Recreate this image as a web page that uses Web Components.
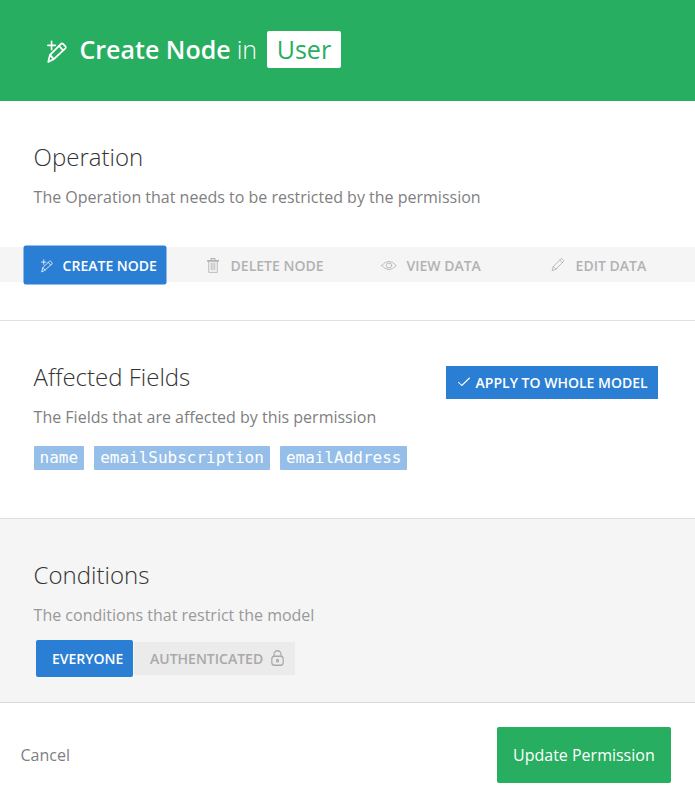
<!DOCTYPE html>
<html lang="en">
<head>
<meta charset="utf-8">
<title>Update Permission</title>
<style>
  html, body { margin: 0; background: #fff; }
  body { font-family: "Open Sans", sans-serif; font-size: 16px; }
</style>
</head>
<body>
<permission-popup></permission-popup>
<script>
const icons = {
  create: '<path d="M5.500 1.500v8.500M1 5.700h9M1.500 23.300l2-7.300L17 4q1-.8 2 0l3.200 2.800q.8 1 0 2L8 20.500ZM3.800 16L8 20.500M14.700 6.500L19.300 11"/>',
  trash: '<path d="M1 4.500h22" stroke-width="2.600"/><path d="M8 3V1h8v2" stroke-width="2"/><path d="M3.500 5v18h17V5M8.500 8v11M12 8v11M15.500 8v11"/>',
  eye: '<path d="M1 12Q12-6 23 12Q12 30 1 12Z"/><ellipse cx="12" cy="12" rx="4" ry="5.500"/>',
  edit: '<path d="M2 21l2-6.500L17 1.500q1-1 2 0l2.500 2.500q1 1 0 2L8.500 19ZM4 14.500l4.500 4.500M15 3.500l4.500 4.500"/>',
  check: '<path d="M1 12.500l6.500 6.500L23 4"/>',
  lock: '<rect x="1.500" y="9.500" width="21" height="13.500" rx="4.500"/><path d="M5.500 9.500V7a6.500 6 0 0 1 13 0v2.500"/><circle cx="12" cy="16" r="1.800"/>'
};

class LineIcon extends HTMLElement {
  connectedCallback() {
    this.attachShadow({ mode: 'open' }).innerHTML = `
      <style>
        :host { display: block; flex: none; width: var(--w, 14px); height: var(--h, 14px); }
        svg { display: block; width: 100%; height: 100%; overflow: visible; fill: none;
              stroke: currentColor; stroke-width: var(--stroke, 1.6); stroke-linejoin: round; stroke-linecap: round; }
      </style>
      <svg viewBox="0 0 24 24" preserveAspectRatio="none">${icons[this.getAttribute('name')]}</svg>`;
  }
}
customElements.define('line-icon', LineIcon);

class PopupHeader extends HTMLElement {
  connectedCallback() {
    this.attachShadow({ mode: 'open' }).innerHTML = `
      <style>
        :host { display: flex; align-items: flex-start; box-sizing: border-box; height: 101px; padding: 31px 0 0 46.7px;
                background: #28ae60; color: #fff; font-size: 25px; line-height: 37px; }
        line-icon { --w: 20px; --h: 22.5px; --stroke: 2; margin: 9px 12.8px 0 0; }
        b { font-weight: 600; }
        i { font-style: normal; font-weight: 300; margin: 0 9.700px 0 6px; }
        span { background: #fff; color: #28ae60; border-radius: 2px; padding: 0 10px; }
      </style>
      <line-icon name="create"></line-icon><b><slot></slot></b><i>in</i><span><slot name="model"></slot></span>`;
  }
}
customElements.define('popup-header', PopupHeader);

class PopupSection extends HTMLElement {
  connectedCallback() {
    this.attachShadow({ mode: 'open' }).innerHTML = `
      <style>
        :host { display: block; box-sizing: border-box; border-bottom: 1px solid #dfdfdf; padding-top: 40px; }
        header { display: flex; justify-content: space-between; padding: 0 37px 0 33.6px; }
        h2 { margin: 0 0 12px; font-size: 24px; line-height: 32px; font-weight: 300; color: #333; }
        p { margin: 0; line-height: 24px; color: var(--desc, #7f7f7f); }
      </style>
      <header><div><h2><slot name="title"></slot></h2><p><slot name="desc"></slot></p></div><slot name="action"></slot></header>
      <slot></slot>`;
  }
}
customElements.define('popup-section', PopupSection);

class OperationTabs extends HTMLElement {
  connectedCallback() {
    this.attachShadow({ mode: 'open' }).innerHTML = `
      <style>
        :host { display: grid; grid-template-columns: 183px 174px 170px 1fr; box-sizing: border-box; align-items: center;
                height: 35px; margin-top: 38px; padding-left: 24px; background: #f5f5f5; }
      </style>
      <slot></slot>`;
  }
}
customElements.define('operation-tabs', OperationTabs);

class OperationTab extends HTMLElement {
  connectedCallback() {
    this.attachShadow({ mode: 'open' }).innerHTML = `
      <style>
        :host { display: flex; align-items: center; height: 37px; margin-bottom: 2px; font-size: 14px; line-height: 37px; font-weight: 600; color: #b2b2b2;
                text-transform: uppercase; white-space: nowrap; }
        :host([active]) { justify-self: start; margin-bottom: 0; box-sizing: border-box; width: 142px; height: 38px; padding: 1px 0 0 16.6px; border-radius: 2px;
                margin-top: -3px; background: #2a7ed3; color: #fff; box-shadow: 0 0 0 .5px #2a7ed3; }
        line-icon { --stroke: 1.5; margin: -1px var(--gap, 10.6px) 0 0; }
      </style>
      <line-icon name="${this.getAttribute('icon')}"></line-icon><slot></slot>`;
  }
}
customElements.define('operation-tab', OperationTab);

class ApplyButton extends HTMLElement {
  connectedCallback() {
    this.attachShadow({ mode: 'open' }).innerHTML = `
      <style>
        :host { display: flex; align-items: center; box-sizing: border-box; width: 212px; height: 33px; margin-top: 5px; padding-left: 12px;
                background: #2a7ed3; color: #fff; font-size: 14px; font-weight: 600; text-transform: uppercase; white-space: nowrap; }
        line-icon { --w: 12px; --h: 12px; --stroke: 2.1; margin: -1px 5.6px 0 0; }
      </style>
      <line-icon name="check"></line-icon><slot></slot>`;
  }
}
customElements.define('apply-button', ApplyButton);

class FieldTags extends HTMLElement {
  connectedCallback() {
    this.attachShadow({ mode: 'open' }).innerHTML = `
      <style>
        :host { display: flex; gap: 10px; padding: 17px 34px 0 33.6px; }
        ::slotted(span) { height: 24px; padding: 0 6px; border-radius: 1px; background: #95bee9; color: #fff;
                font: 16px/24px "DejaVu Sans Mono", monospace; }
      </style>
      <slot></slot>`;
  }
}
customElements.define('field-tags', FieldTags);

class AudienceSwitch extends HTMLElement {
  connectedCallback() {
    this.attachShadow({ mode: 'open' }).innerHTML = `
      <style>
        :host { display: flex; align-items: center; margin: 13px 0 0 36px; font-size: 14px; line-height: 37px; font-weight: 600; text-transform: uppercase; }
        .on { box-sizing: border-box; width: 97px; height: 37px; padding-left: 16px; border-radius: 2px; background: #2a7ed3; color: #fff; }
        .off { display: flex; align-items: center; box-sizing: border-box; width: 161px; margin-left: 1px; height: 33px; padding-left: 16px; background: #ebebeb; color: #a9a9a9; }
        line-icon { --w: 13px; --h: 16px; --stroke: 2.2; margin: -1px 0 0 7.5px; }
      </style>
      <div class="on"><slot name="on"></slot></div>
      <div class="off"><slot name="off"></slot><line-icon name="lock"></line-icon></div>`;
  }
}
customElements.define('audience-switch', AudienceSwitch);

class PopupFooter extends HTMLElement {
  connectedCallback() {
    this.attachShadow({ mode: 'open' }).innerHTML = `
      <style>
        :host { display: flex; align-items: center; justify-content: space-between; height: 56px; padding: 24px 24px 21px 20.5px; color: #7f7f7f; }
        .save { box-sizing: border-box; width: 174px; line-height: 56px; padding-left: 16px; border-radius: 2px; background: #28ae60; color: #fff; }
      </style>
      <div><slot name="cancel"></slot></div><div class="save"><slot name="save"></slot></div>`;
  }
}
customElements.define('popup-footer', PopupFooter);

class PermissionPopup extends HTMLElement {
  connectedCallback() {
    this.attachShadow({ mode: 'open' }).innerHTML = `
      <style>
        :host { display: block; }
        .operation { height: 220px; }
        .fields { height: 198px; }
        .conditions { height: 184px; background: #f5f5f5; --desc: #999; border-color: #dadada; }
        .create { --w: 12px; --h: 13px; --gap: 10px; }
        .trash { --w: 12px; --h: 15px; --gap: 11.6px; }
        .eye { --w: 16px; --h: 11px; --gap: 9.5px; }
      </style>
      <popup-header>Create Node<span slot="model">User</span></popup-header>
      <popup-section class="operation">
        <span slot="title">Operation</span>
        <span slot="desc">The Operation that needs to be restricted by the permission</span>
        <operation-tabs>
          <operation-tab class="create" icon="create" active>Create Node</operation-tab>
          <operation-tab class="trash" icon="trash">Delete Node</operation-tab>
          <operation-tab class="eye" icon="eye">View Data</operation-tab>
          <operation-tab icon="edit">Edit Data</operation-tab>
        </operation-tabs>
      </popup-section>
      <popup-section class="fields">
        <span slot="title">Affected Fields</span>
        <span slot="desc">The Fields that are affected by this permission</span>
        <apply-button slot="action">Apply to whole model</apply-button>
        <field-tags><span>name</span><span>emailSubscription</span><span>emailAddress</span></field-tags>
      </popup-section>
      <popup-section class="conditions">
        <span slot="title">Conditions</span>
        <span slot="desc">The conditions that restrict the model</span>
        <audience-switch><span slot="on">Everyone</span><span slot="off">Authenticated</span></audience-switch>
      </popup-section>
      <popup-footer><span slot="cancel">Cancel</span><span slot="save">Update Permission</span></popup-footer>`;
  }
}
customElements.define('permission-popup', PermissionPopup);
</script>
</body>
</html>
